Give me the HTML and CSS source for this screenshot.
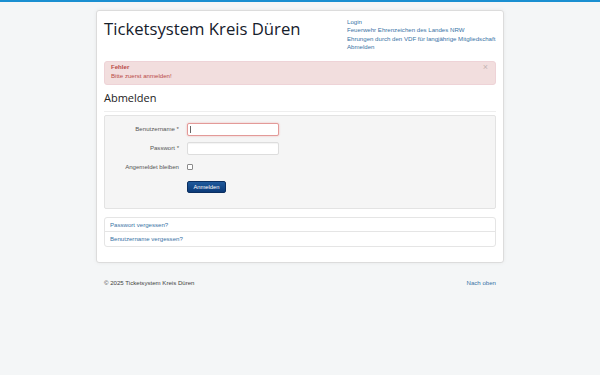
FILE: index.html
```html
<!DOCTYPE html>
<html lang="de">
<head>
<meta charset="utf-8">
<title>Ticketsystem Kreis Düren - Abmelden</title>
<link rel="stylesheet" href="styles.css">
</head>
<body>
<div class="page">
  <div class="container">
    <header class="header">
      <h1 class="site-title">Ticketsystem Kreis Düren</h1>
      <ul class="menu">
        <li><a href="#">Login</a></li>
        <li><a href="#">Feuerwehr Ehrenzeichen des Landes NRW</a></li>
        <li><a href="#">Ehrungen durch den VDF für langjährige Mitgliedschaft</a></li>
        <li><a href="#">Abmelden</a></li>
      </ul>
    </header>

    <div class="alert">
      <span class="close">×</span>
      <h4 class="alert-heading">Fehler</h4>
      <div class="alert-message">Bitte zuerst anmelden!</div>
    </div>

    <div class="page-header">
      <h2>Abmelden</h2>
    </div>

    <form class="well">
      <div class="control-group">
        <label class="control-label" for="username">Benutzername *</label>
        <span class="field focused"><input id="username" type="text"><span class="caret"></span></span>
      </div>
      <div class="control-group">
        <label class="control-label" for="password">Passwort *</label>
        <span class="field"><input id="password" type="password"></span>
      </div>
      <div class="control-group">
        <label class="control-label" for="remember">Angemeldet bleiben</label>
        <span class="field"><input id="remember" class="checkbox" type="checkbox"></span>
      </div>
      <div class="control-group actions">
        <span></span>
        <span class="field"><button type="button" class="btn">Anmelden</button></span>
      </div>
    </form>

    <ul class="nav-list">
      <li><a href="#">Passwort vergessen?</a></li>
      <li><a href="#">Benutzername vergessen?</a></li>
    </ul>
  </div>

  <footer class="footer">
    <span>© 2025 Ticketsystem Kreis Düren</span>
    <a href="#">Nach oben</a>
  </footer>
</div>
</body>
</html>
```

FILE: styles.css
```css
html, body {
  margin: 0;
  padding: 0;
}
body {
  background: #f4f6f7;
  border-top: 2px solid #1a8fd1;
  font-family: "Liberation Sans", Arial, sans-serif;
  font-size: 6.1px;
  line-height: 8.4px;
  color: #555;
}
a {
  color: #3a74a6;
  text-decoration: none;
}
.page {
  width: 408px;
  margin: 0 auto;
  padding-top: 8px;
}
.container {
  background: #fff;
  border: 1px solid #dcdcdc;
  border-radius: 3px;
  box-shadow: 0 0 4px rgba(0,0,0,0.06);
  padding: 7px;
}
.header {
  display: flex;
  justify-content: space-between;
  align-items: flex-start;
  margin-bottom: 9px;
}
.site-title {
  margin: 0;
  font-family: "Open Sans", sans-serif;
  font-weight: 400;
  font-size: 16.7px;
  line-height: 22px;
  color: #16202b;
}
.menu {
  list-style: none;
  margin: 0;
  padding: 0;
  width: 149px;
}
.menu li {
  line-height: 8.4px;
  white-space: nowrap;
}
.alert {
  position: relative;
  background: #f2dede;
  border: 1px solid #eed3d7;
  border-radius: 3px;
  color: #b94a48;
  padding: 0 16px 3px 6px;
}
.alert-heading {
  margin: 0;
  font-size: 6.1px;
  font-weight: 700;
  line-height: 9.5px;
}
.alert-message {
  line-height: 9.5px;
}
.close {
  position: absolute;
  right: 7px;
  top: 1px;
  font-size: 9px;
  line-height: 9px;
  color: #000;
  opacity: 0.2;
}
.page-header {
  margin: 6px 0 3px;
  padding-bottom: 7px;
  border-bottom: 1px solid #eee;
}
.page-header h2 {
  margin: 0;
  font-family: "Open Sans", sans-serif;
  font-weight: 400;
  font-size: 11px;
  line-height: 13px;
  color: #222;
}
.well {
  margin: 0;
  background: #f5f5f5;
  border: 1px solid #e3e3e3;
  border-radius: 2px;
  padding: 7px 7px 14px;
  display: flex;
  flex-direction: column;
  gap: 6px;
}
.control-group {
  display: grid;
  grid-template-columns: 67px 1fr;
  column-gap: 8px;
  align-items: center;
  min-height: 13px;
}
.control-label {
  text-align: right;
  color: #555;
}
.field {
  display: flex;
  align-items: center;
  position: relative;
}
.field input[type="text"],
.field input[type="password"] {
  box-sizing: border-box;
  width: 92px;
  height: 13px;
  margin: 0;
  padding: 0 3px;
  border: 1px solid #ddd;
  border-radius: 2px;
  background: #fff;
  box-shadow: inset 0 1px 1px rgba(0,0,0,0.05);
  outline: none;
}
.focused input[type="text"] {
  border-color: #e39a98;
  box-shadow: 0 0 2px rgba(233,100,100,0.45);
}
.caret {
  position: absolute;
  left: 3px;
  top: 3px;
  width: 1px;
  height: 7px;
  background: #666;
}
.checkbox {
  appearance: none;
  -webkit-appearance: none;
  box-sizing: border-box;
  width: 6px;
  height: 6px;
  margin: 0;
  border: 1px solid #8a8a8a;
  border-radius: 1px;
  background: #fff;
}
.actions {
  margin-top: 1px;
}
.btn {
  box-sizing: border-box;
  width: 39px;
  height: 12px;
  padding: 0;
  border: 1px solid #0b2f60;
  border-radius: 2px;
  background: linear-gradient(#1f5a9c, #0b3a78);
  color: #fff;
  font-family: "Liberation Sans", Arial, sans-serif;
  font-size: 5.8px;
  line-height: 10px;
  cursor: pointer;
}
.nav-list {
  list-style: none;
  margin: 8px 0 8px;
  padding: 0;
  border: 1px solid #e5e5e5;
  border-radius: 3px;
}
.nav-list li {
  line-height: 13.5px;
  padding: 0 5px;
}
.nav-list li + li {
  border-top: 1px solid #e5e5e5;
}
.footer {
  display: flex;
  justify-content: space-between;
  padding: 0 8px;
  margin-top: 16px;
  color: #444;
}
```
